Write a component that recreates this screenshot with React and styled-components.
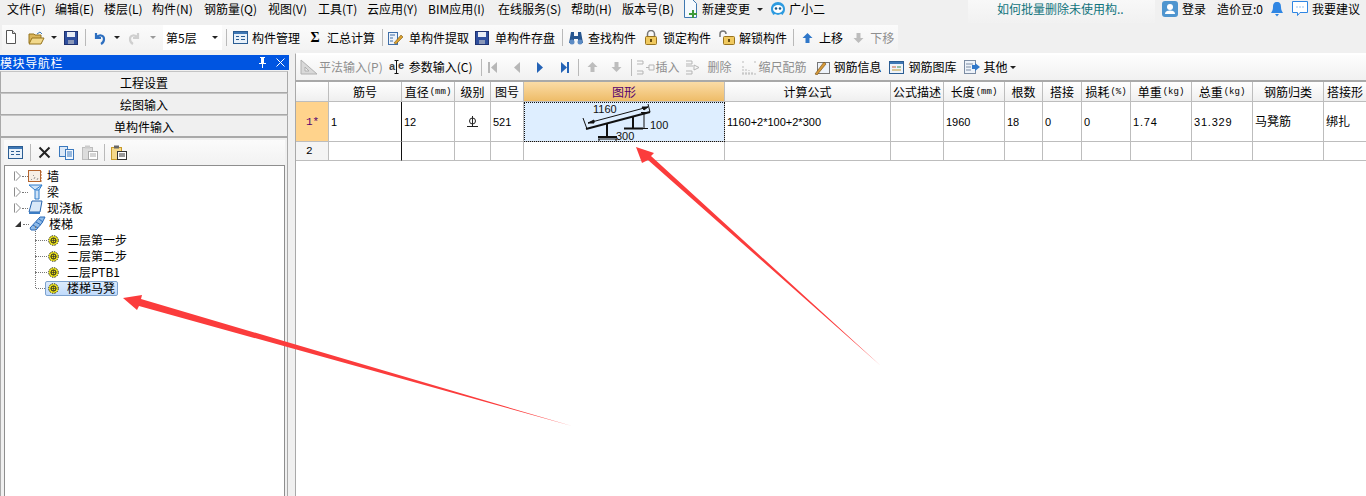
import React from 'react'
import styled, { createGlobalStyle } from 'styled-components'

const GlobalStyle = createGlobalStyle`
  html, body { margin: 0; padding: 0; background: #f0f0f0; overflow: hidden; }
  * { box-sizing: border-box; }
  #root { width: 1366px; height: 496px; }
`

const Page = styled.div`
  position: relative;
  width: 1366px;
  height: 496px;
  overflow: hidden;
  background: #f0f0f0;
  color: #000;
  font: 12px/16px "Noto Sans CJK SC", "Liberation Sans", sans-serif;
`

const MenuBar = styled.div`
  height: 25px;
  display: flex;
  align-items: flex-start;
  padding: 1px 6px 0 7px;
`
const MenuItem = styled.span`
  flex: none;
  width: ${p => p.$w}px;
  height: 16px;
  white-space: nowrap;
  display: flex;
  align-items: center;
`
const TipBox = styled.div`
  width: 187px;
  height: 23px;
  margin: -1px 7px 0 auto;
  padding: 1px 0 0 29px;
  color: #10737c;
  background: linear-gradient(#f8f8f8, #f1f1f1);
`
const UserArea = styled.div`
  flex: none;
  width: 198px;
  display: flex;
  align-items: center;
  white-space: nowrap;
`
const UserItem = styled.span`
  display: inline-flex;
  flex: none;
  width: ${p => (p.$w ? `${p.$w}px` : 'auto')};
  margin-right: ${p => p.$mr ?? 0}px;
`

const ToolRow = styled.div`
  display: flex;
  align-items: center;
  height: 25px;
  width: 896px;
  background: linear-gradient(#fbfbfb, #f3f3f3);
  margin-left: 2px;
  padding-left: 3px;
  white-space: nowrap;
`
const Tool = styled.span`
  display: inline-flex;
  flex: none;
  align-items: center;
  gap: ${p => p.$gap ?? 4}px;
  margin-right: ${p => p.$mr ?? 0}px;
  color: ${p => (p.$off ? '#8f8f8f' : '#000')};
`
const Sep = styled.i`
  flex: none;
  width: 1px;
  height: 17px;
  margin: 0 ${p => p.$r ?? 5}px 0 ${p => p.$l ?? 5}px;
  background: #b9b9b9;
`
const Caret = styled.i`
  flex: none;
  width: 0;
  height: 0;
  margin: 0 ${p => p.$r ?? 7}px 0 ${p => p.$l ?? 6}px;
  border-left: 3px solid transparent;
  border-right: 3px solid transparent;
  border-top: 3px solid ${p => p.$c || '#222'};
`
const FloorSelect = styled.span`
  flex: none;
  width: 59px;
  height: 25px;
  background: #fff;
  display: flex;
  align-items: center;
  justify-content: space-between;
  padding-left: 3px;
`
const Sigma = styled.b`
  width: 10px;
  text-align: center;
  font-family: "Liberation Serif", serif;
  font-size: 14px;
`

const Body = styled.div`
  display: flex;
  height: 446px;
  margin-top: 3px;
`

const LeftPanel = styled.aside`
  width: 289px;
  padding-top: 2px;
  flex: none;
`
const TitleBar = styled.div`
  height: 15px;
  background: #0055e1;
  color: #fff;
  display: flex;
  align-items: center;
  letter-spacing: 0.6px;
  justify-content: space-between;
  padding-right: 2px;
`
const TitleIcons = styled.div`
  display: flex;
  gap: 9px;
  align-items: center;
  margin-right: 2px;
`
const NavButton = styled.div`
  height: 22px;
  width: 288px;
  margin-top: ${p => p.$top ?? 0}px;
  border: 1px solid #a9a9a9;
  border-top-color: #c4c4c4;
  text-align: center;
  line-height: 21px;
  background: #f0f0f0;
`
const SubPanel = styled.div`
  width: 288px;
  height: 359px;
  border: 1px solid #a9a9a9;
  border-bottom: 0;
  padding: 2px 2px 0 3px;
`
const SubTools = styled.div`
  height: 25px;
  display: flex;
  align-items: center;
  padding-left: 4px;
  background: linear-gradient(#fbfbfb, #f2f2f2);
`
const Tree = styled.div`
  height: 332px;
  background: #fff;
  border: 1px solid #8e8e8e;
  border-bottom: 0;
  padding-top: 2px;
`
const TreeRow = styled.div`
  position: relative;
  height: 16px;
  display: flex;
  align-items: center;
  padding-left: ${p => (p.$leaf ? 31 : 10)}px;
`
const Expander = styled.span`
  width: 0;
  height: 0;
  margin-right: 2px;
  border-top: 5px solid transparent;
  border-bottom: 5px solid transparent;
  border-left: 5px solid #fff;
  filter: drop-shadow(1px 0 0 #8c8c8c) drop-shadow(-1px 0 0 #8c8c8c);
`
const OpenMark = styled.span`
  width: 0;
  height: 0;
  margin: 0 2px 0 0;
  border-left: 6px solid transparent;
  border-bottom: 6px solid #333;
`
const Stub = styled.span`
  width: ${p => p.$w}px;
  border-top: 1px dotted #777;
  flex: none;
`
const VLine = styled.span`
  position: absolute;
  left: 30px;
  top: ${p => p.$top}px;
  height: ${p => p.$h}px;
  border-left: 1px dotted #777;
`
const TreeLabel = styled.span`
  display: inline-flex;
  align-items: center;
  margin-left: ${p => p.$ml ?? 0}px;
  white-space: nowrap;
`
const LeafLabel = styled.span`
  display: inline-flex;
  align-items: center;
  gap: 8px;
  height: 15px;
  margin-left: ${p => (p.$on ? -2 : 1)}px;
  white-space: nowrap;
  ${p => p.$on && `
    padding: 0 2px;
    border: 1px solid #7da2ce;
    border-radius: 2px;
    background: linear-gradient(#dcebfc, #c1dbfc);
  `}
`

const RightPanel = styled.main`
  margin-left: 6px;
  flex: 1;
  min-width: 0;
  border-left: 1px solid #a9a9a9;
  border-top: 1px solid #fff;
  background: #fff;
`
const GridTools = styled.div`
  display: flex;
  align-items: center;
  height: 27px;
  margin-top: 1px;
  padding: 0 0 1px 4px;
  white-space: nowrap;
  background: linear-gradient(#fdfdfd, #f1f1f1);
  border-bottom: 2px solid #a9a9a9;
`
const SheetGrid = styled.div`
  display: grid;
  grid-template-columns: 33px 73px 53px 36px 33px 201px 166px 53px 61px 38px 39px 49px 61px 61px 71px 43px;
  grid-template-rows: 20px 40px 19px;
  width: 1071px;
  overflow: hidden;
  font-size: 11px;
`
const Cell = styled.div`
  display: flex;
  align-items: center;
  justify-content: ${p => (p.$center ? 'center' : 'flex-start')};
  padding-left: ${p => (p.$center ? 0 : 2)}px;
  overflow: hidden;
  white-space: nowrap;
  border-right: 1px solid ${p => (p.$thick ? '#111' : '#bdbdbd')};
  border-bottom: 1px solid #bdbdbd;
  font-family: "Liberation Sans", "Noto Sans CJK SC", sans-serif;
  letter-spacing: ${p => (p.$spaced ? '0.8px' : 0)};
  font-size: ${p => (p.$cjk ? '12px' : '11px')};
`
const HeadCell = styled.div`
  display: flex;
  align-items: center;
  justify-content: center;
  overflow: hidden;
  white-space: nowrap;
  font-size: 12px;
  border-right: 1px solid #bdbdbd;
  border-bottom: 1px solid #bdbdbd;
  color: ${p => (p.$active ? '#55006e' : '#000')};
  background: ${p => (p.$active
    ? 'linear-gradient(#fbdca6, #eebc68)'
    : 'linear-gradient(#ffffff, #efefef)')};
  small {
    font: 9px "Liberation Mono", monospace;
    margin-left: 1px;
  }
`
const RowHead = styled(HeadCell)`
  justify-content: flex-start;
  font-size: 11px;
  color: ${p => (p.$current ? '#55006e' : '#000')};
  background: ${p => (p.$current ? '#ffd38c' : '#f4f4f4')};
  font-family: "Liberation Mono", monospace;
  padding-left: 10px;
`
const ShapeCell = styled.div`
  background: #deeeff;
  outline: 1px dotted #111;
  outline-offset: -1px;
  border-right: 1px solid #bdbdbd;
  border-bottom: 1px solid #bdbdbd;
  overflow: hidden;
`
const ShapeSvg = styled.svg`
  display: block;
`

const ArrowLayer = styled.svg`
  position: absolute;
  left: 0;
  top: 0;
  pointer-events: none;
`

/* ---- 小图标 ---- */
const IconSvg = styled.svg`
  flex: none;
`
const Svg = ({ w = 16, h = 16, children }) => (
  <IconSvg width={w} height={h} viewBox={`0 0 ${w} ${h}`}>{children}</IconSvg>
)
const Manage = () => (
  <Svg w={15} h={13}>
    <rect x=".5" y=".5" width="14" height="12" fill="#e8f1fa" stroke="#2b5d93" />
    <rect x="1" y="1" width="13" height="2" fill="#3f78b5" />
    <path d="M3 5.500h3M3 8.500h3M8 5.500h4M8 8.500h4" stroke="#2b5d93" fill="none" />
  </Svg>
)
const NewFile = () => (
  <Svg w={12} h={15}>
    <path d="M1.500.5h6l3 3v10h-9z" fill="#fff" stroke="#555" />
    <path d="M7.500.5v3h3" fill="#ddd" stroke="#555" />
  </Svg>
)
const OpenFile = () => (
  <Svg w={17} h={14}>
    <path d="M1 3h5l1 1h6v8H1z" fill="#d9b45a" stroke="#96751f" />
    <path d="M1 13l3-6h12l-3 6z" fill="#f2d98c" stroke="#96751f" />
    <path d="M9 3l3-2 2 2" fill="none" stroke="#3f78b5" />
  </Svg>
)
const Floppy = () => (
  <Svg w={14} h={14}>
    <rect x=".5" y=".5" width="13" height="13" fill="#2f4f9e" stroke="#1f3270" />
    <rect x="3" y="1" width="8" height="5" fill="#e9eef6" />
    <rect x="4" y="9" width="6" height="4" fill="#8b98b8" />
  </Svg>
)
const Undo = () => (
  <Svg w={13} h={14}>
    <path d="M3 2v5h5M3 7c3-4 8-3 8 1 0 2-1 4-3 5" fill="none" stroke="#2d6fc0" strokeWidth="2.200" />
  </Svg>
)
const Redo = () => (
  <Svg w={13} h={14}>
    <path d="M10 2v5H5M10 7C7 3 2 4 2 8c0 2 1 4 3 5" fill="none" stroke="#cfcfcf" strokeWidth="2.200" />
  </Svg>
)
const Extract = () => (
  <Svg w={16} h={15}>
    <rect x=".5" y="2.500" width="9" height="12" fill="#eef3fa" stroke="#3f6ea8" />
    <path d="M2 5h5M2 8h3M2 11h3" stroke="#3f6ea8" />
    <path d="M6 13l7-8 2 2-7 7z" fill="#dba02f" stroke="#7b5b16" strokeWidth=".6" />
  </Svg>
)
const Binoculars = () => (
  <Svg w={16} h={14}>
    <path d="M3 1h3v4h4V1h3l2 11h-5V8H6v4H1z" fill="#27568f" />
    <circle cx="4" cy="11" r="2.500" fill="#5c8bc4" />
    <circle cx="12" cy="11" r="2.500" fill="#5c8bc4" />
  </Svg>
)
const Lock = ({ open }) => (
  <Svg w={open ? 18 : 14} h={15}>
    <path d={open ? 'M2 7V4a3 3 0 0 1 6 0' : 'M3.500 7V4a3.500 3.500 0 0 1 7 0v3'} fill="none" stroke="#777" strokeWidth="1.500" />
    <rect x={open ? 5.5 : 1.5} y="6.500" width="11" height="8" rx="1" fill="#f0c95f" stroke="#99741f" />
    <rect x={open ? 10 : 6} y="9" width="2" height="3" fill="#6b4f10" />
  </Svg>
)
const UpDown = ({ down, off }) => (
  <Svg w={11} h={12}>
    <path d={down ? 'M3.500 1h4v5h3L5.500 11 .5 6h3z' : 'M3.500 11h4V6h3L5.500 1 .5 6h3z'} fill={off ? '#bdbdbd' : '#2f77c9'} />
  </Svg>
)
const Step = ({ dir, bar, off }) => {
  const c = off ? '#b7b7b7' : '#2463b6'
  return (
    <Svg w={11} h={13}>
      {dir === 'l'
        ? <path d="M9 1v11L3 6.500z" fill={c} />
        : <path d="M2 1v11l6-5.500z" fill={c} />}
      {bar && <rect x={dir === 'l' ? 0 : 8} y="1" width="2" height="11" fill={c} />}
    </Svg>
  )
}
const Ruler = () => (
  <Svg w={18} h={16}>
    <path d="M1 15V1l16 14z" fill="#d9d9d9" stroke="#b0b0b0" />
    <path d="M5 12V8l4 4z" fill="#f0f0f0" stroke="#b0b0b0" />
  </Svg>
)
// 参数输入: a 和 e 中间一个光标
const ParamGlyph = () => (
  <Svg w={17} h={16}>
    <g fontFamily="Liberation Sans, sans-serif" fontWeight="700" fontSize="11" fill="#444">
      <text x="0" y="11">a</text>
      <text x="9" y="10">e</text>
    </g>
    <path d="M7.500 2v12M5.500 1.500h4M5.500 14.500h4" stroke="#111" fill="none" />
  </Svg>
)
const Insert = ({ del }) => (
  <Svg w={19} h={15}>
    <path d={del ? 'M1 1h6v3H1M1 11h6v3H1M1 6h7' : 'M1 1h6v3H1M1 11h6v3H1'} fill="none" stroke="#b5b5b5" />
    <path d={del ? 'M9 5l5 2.500-5 2.500z' : 'M18 5v5h-5V5zM10 7.500h3'} fill="none" stroke="#b5b5b5" />
  </Svg>
)
const Scale = () => (
  <Svg w={17} h={15}>
    <path d="M1 14h15M2 14V6M5 14V8M8 14v-4M11 14v-3M1 2h3M13 2h3" stroke="#bbb" fill="none" strokeDasharray="2 1" />
  </Svg>
)
const RebarInfo = () => (
  <Svg w={16} h={15}>
    <rect x="3.500" y="2.500" width="12" height="11" fill="#eef3fa" stroke="#777" />
    <path d="M1 14l9-12 2 2-9 11z" fill="#d79a3a" stroke="#6d4b14" strokeWidth=".6" />
  </Svg>
)
const RebarLib = () => (
  <Svg w={15} h={13}>
    <rect x=".5" y=".5" width="14" height="12" fill="#eef3fa" stroke="#2b5d93" />
    <rect x="1" y="1" width="13" height="2" fill="#3f78b5" />
    <path d="M3 6h4" stroke="#c65a3a" /><path d="M8 6h4" stroke="#3f8a4f" /><path d="M3 9h9" stroke="#c29a2f" />
  </Svg>
)
const Other = () => (
  <Svg w={16} h={14}>
    <rect x=".5" y=".5" width="11" height="13" fill="#eef3fa" stroke="#7d8da3" />
    <path d="M2 4h7M2 7h5M2 10h5" stroke="#7d8da3" />
    <path d="M8 5h3V3l5 4-5 4V9H8z" fill="#2f77c9" />
  </Svg>
)
const DocAdd = () => (
  <Svg w={15} h={20}>
    <path d="M1.500.5h8l4 4v14h-12z" fill="#f5fafe" stroke="#3e78b0" />
    <path d="M9 11h2v3h3v2h-3v3H9v-3H6v-2h3z" fill="#3f9a3a" />
  </Svg>
)
const Mascot = () => (
  <Svg w={16} h={16}>
    <path d="M8 1c4 0 7 3 7 7s-2 4-2 6l-2-1-3 1-3-1-2 1c0-2-2-2-2-6s3-7 7-7z" fill="#2d9be0" />
    <ellipse cx="8" cy="8" rx="5" ry="4" fill="#fff" />
    <circle cx="6" cy="7.500" r="1.300" fill="#1b5b8a" /><circle cx="10" cy="7.500" r="1.300" fill="#1b5b8a" />
  </Svg>
)
const User = () => (
  <Svg w={16} h={16}>
    <rect width="16" height="16" rx="3" fill="#4f95cf" />
    <circle cx="8" cy="6" r="3" fill="#fff" />
    <path d="M3 13c0-3 3-3.500 5-3.500s5 .5 5 3.500z" fill="#fff" />
  </Svg>
)
const Bell = () => (
  <Svg w={14} h={16}>
    <path d="M7 1c3 0 4 2 4 5 0 3 1 4 2 6H1c1-2 2-3 2-6 0-3 1-5 4-5z" fill="#2f86e3" />
    <path d="M5 13h4l-2 2.500z" fill="#2f86e3" />
  </Svg>
)
const Chat = () => (
  <Svg w={16} h={16}>
    <path d="M.5.5h15v11H8l-2.500 3v-3h-5z" fill="#fff" stroke="#2f86e3" />
    <path d="M4.500 6h1M7.500 6h1M10.500 6h1" stroke="#2f86e3" />
  </Svg>
)
const Cross = () => (
  <Svg w={13} h={13}>
    <path d="M1.500 1.500l10 10M11.500 1.500l-10 10" stroke="#222" strokeWidth="2" />
  </Svg>
)
const Copy = () => (
  <Svg w={15} h={14}>
    <rect x=".5" y=".5" width="8" height="10" fill="#dbe8f7" stroke="#3a78bd" />
    <rect x="6.500" y="3.500" width="8" height="10" fill="#f3f8fe" stroke="#3a78bd" />
    <path d="M8 6h5M8 8h5M8 10h5" stroke="#3a78bd" />
  </Svg>
)
const Paste = ({ dim }) => {
  const a = dim ? '#bdbdbd' : '#c79a2a'
  const b = dim ? '#dcdcdc' : '#f5d98a'
  return (
    <Svg w={16} h={15}>
      <rect x=".5" y="2.500" width="10" height="12" fill={b} stroke={a} />
      <rect x="3" y=".5" width="5" height="3" fill={dim ? '#ccc' : '#666'} />
      <rect x="6.500" y="6.500" width="9" height="8" fill="#fff" stroke={dim ? '#aaa' : '#333'} />
      <path d="M8 9h6M8 11h6" stroke={dim ? '#aaa' : '#333'} />
    </Svg>
  )
}
const Wall = () => (
  <Svg w={15} h={14}>
    <rect x=".5" y="1.500" width="12" height="11" fill="#f7efe6" stroke="#b5652f" />
    <path d="M3 11l1-1M6 10l1-2M9 11l1-2M5 7l1-1" stroke="#999" />
    <path d="M13 3h1M13 6h1M13 9h1M13 12h1" stroke="#c0682c" />
  </Svg>
)
const Beam = () => (
  <Svg w={15} h={16}>
    <path d="M1 1h13l-3 5v9H7V6z" fill="#cfe3f7" stroke="#2f7ccb" />
    <path d="M7 6l7-5M8 6h3" stroke="#2f7ccb" />
  </Svg>
)
const Slab = () => (
  <Svg w={15} h={16}>
    <path d="M4 1h10l-2 11H1z" fill="#d8e8f8" stroke="#2563ad" />
    <path d="M1 12h11v2H1z" fill="#3b7cc4" />
  </Svg>
)
const Stairs = () => (
  <Svg w={17} h={16}>
    <path d="M1 12L11 1h5l-3 6-6 7H2z" fill="#8fbbe8" stroke="#2a6ab8" />
    <path d="M4 9l5 3M7 6l5 3M10 3l4 3" stroke="#2a6ab8" />
  </Svg>
)
const Gear = () => (
  <Svg w={11} h={11}>
    <circle cx="5.500" cy="5.500" r="4.800" fill="#f5ec1e" stroke="#222" strokeDasharray="1.500 1" />
    <circle cx="5.500" cy="5.500" r="2.600" fill="#efe000" stroke="#222" />
    <path d="M3 5.500h5M5.500 3v5" stroke="#333" strokeWidth=".7" />
  </Svg>
)
const GradeMark = () => (
  <Svg w={11} h={11}>
    <circle cx="5.500" cy="5" r="3" fill="none" stroke="#222" />
    <path d="M5.500 0v10M0 10.500h11" stroke="#222" />
  </Svg>
)
const Pin = () => (
  <Svg w={9} h={11}>
    <path d="M2 0h5v1H6v5h2v1H5v4H4V7H1V6h2V1H2z" fill="#fff" />
  </Svg>
)
const CloseX = () => (
  <Svg w={9} h={9}>
    <path d="M.5.500l8 8M8.500.500l-8 8" stroke="#fff" />
  </Svg>
)

// 马凳筋示意图
const ShapeDrawing = () => (
  <ShapeSvg width="200" height="40" viewBox="0 0 200 40">
    <g stroke="#111" fill="none">
      <path d="M62 27L126 10" strokeWidth="2" />
      <path d="M59 16l4 11M124 2l2 8" />
      <path d="M64 21L124 5" />
      <path d="M64 21l6-3v3zM124 5l-6 0 2 3z" fill="#111" />
      <path d="M83 22V34M74 35h19" strokeWidth="2" />
      <path d="M74 37h19M75 37v3M92 37v3" />
      <path d="M109 14V26M100 26.500h19" strokeWidth="2" />
      <path d="M117 10.500h7M117 26.500h7M120 11v15" />
    </g>
    <g fontFamily="Liberation Sans, sans-serif" fontSize="11" fill="#111">
      <text x="69" y="11">1160</text>
      <text x="126" y="27">100</text>
      <text x="92" y="37.500">300</text>
    </g>
  </ShapeSvg>
)

const menus = [
  ['文件(F)', 48], ['编辑(E)', 49], ['楼层(L)', 48], ['构件(N)', 52], ['钢筋量(Q)', 64], ['视图(V)', 50],
  ['工具(T)', 49], ['云应用(Y)', 61], ['BIM应用(I)', 70], ['在线服务(S)', 73], ['帮助(H)', 51], ['版本号(B)', 61],
]

const columns = [
  ['筋号'], ['直径', '(mm)'], ['级别'], ['图号'], ['图形'], ['计算公式'], ['公式描述'], ['长度', '(mm)'],
  ['根数'], ['搭接'], ['损耗', '(%)'], ['单重', '(kg)'], ['总重', '(kg)'], ['钢筋归类'], ['搭接形'],
]

const App = () => (
  <Page>
    <GlobalStyle />
    <MenuBar>
      {menus.map(([label, w]) => <MenuItem key={label} $w={w}>{label}</MenuItem>)}
      <MenuItem $w={19}><DocAdd /></MenuItem>
      <MenuItem $w={55}>新建变更</MenuItem>
      <MenuItem $w={13}><Caret $l={0} $r={0} /></MenuItem>
      <MenuItem $w={19}><Mascot /></MenuItem>
      <MenuItem $w={36}>广小二</MenuItem>
      <TipBox>如何批量删除未使用构..</TipBox>
      <UserArea>
        <UserItem $mr={4}><User /></UserItem>
        <UserItem $mr={11}>登录</UserItem>
        <UserItem $w={53}>造价豆:0</UserItem>
        <UserItem $mr={8}><Bell /></UserItem>
        <UserItem $mr={4}><Chat /></UserItem>
        <UserItem>我要建议</UserItem>
      </UserArea>
    </MenuBar>

    <ToolRow>
      <Tool $mr={11}><NewFile /></Tool>
      <Tool><OpenFile /></Tool>
      <Caret />
      <Tool><Floppy /></Tool>
      <Sep $l={7} $r={7} />
      <Tool><Undo /></Tool>
      <Caret $l={8} $r={8} />
      <Tool><Redo /></Tool>
      <Caret $l={9} $r={7} $c="#999" />
      <FloorSelect>第5层<Caret $l={0} $r={4} /></FloorSelect>
      <Sep $l={4} $r={6} />
      <Tool $mr={10}><Manage />构件管理</Tool>
      <Tool $gap={7}><Sigma>Σ</Sigma>汇总计算</Tool>
      <Sep $l={7} $r={5} />
      <Tool $gap={5} $mr={6}><Extract />单构件提取</Tool>
      <Tool $gap={6}><Floppy />单构件存盘</Tool>
      <Sep $l={7} $r={5} />
      <Tool $mr={8}><Binoculars />查找构件</Tool>
      <Tool $gap={5} $mr={7}><Lock />锁定构件</Tool>
      <Tool $gap={3} $mr={6}><Lock open />解锁构件</Tool>
      <Sep $l={0} $r={8} />
      <Tool $gap={6} $mr={10}><UpDown />上移</Tool>
      <Tool $gap={6} $off><UpDown down off />下移</Tool>
    </ToolRow>

    <Body>
      <LeftPanel>
        <TitleBar>
          模块导航栏
          <TitleIcons><Pin /><CloseX /></TitleIcons>
        </TitleBar>
        <NavButton $top={1}>工程设置</NavButton>
        <NavButton>绘图输入</NavButton>
        <NavButton>单构件输入</NavButton>
        <SubPanel>
          <SubTools>
            <Manage />
            <Sep $l={7} $r={7} />
            <Tool $mr={8}><Cross /></Tool>
            <Tool $mr={8}><Copy /></Tool>
            <Paste dim />
            <Sep $l={6} $r={6} />
            <Paste />
          </SubTools>
          <Tree>
            <TreeRow><Expander /><Stub $w={6} /><Wall /><TreeLabel $ml={4}>墙</TreeLabel></TreeRow>
            <TreeRow><Expander /><Stub $w={6} /><Beam /><TreeLabel $ml={4}>梁</TreeLabel></TreeRow>
            <TreeRow><Expander /><Stub $w={6} /><Slab /><TreeLabel $ml={4}>现浇板</TreeLabel></TreeRow>
            <TreeRow><OpenMark /><Stub $w={6} /><Stairs /><TreeLabel $ml={3}>楼梯</TreeLabel></TreeRow>
            <TreeRow $leaf><VLine $top={-6} $h={14} /><Stub $w={11} /><LeafLabel><Gear />二层第一步</LeafLabel></TreeRow>
            <TreeRow $leaf><VLine $top={-8} $h={16} /><Stub $w={11} /><LeafLabel><Gear />二层第二步</LeafLabel></TreeRow>
            <TreeRow $leaf><VLine $top={-8} $h={16} /><Stub $w={11} /><LeafLabel><Gear />二层PTB1</LeafLabel></TreeRow>
            <TreeRow $leaf><VLine $top={-8} $h={16} /><Stub $w={11} /><LeafLabel $on><Gear />楼梯马凳</LeafLabel></TreeRow>
          </Tree>
        </SubPanel>
      </LeftPanel>

      <RightPanel>
        <GridTools>
          <Tool $off $gap={1} $mr={6}><Ruler />平法输入(P)</Tool>
          <Tool $gap={3} $mr={4}><ParamGlyph />参数输入(C)</Tool>
          <Sep $l={4} $r={6} />
          <Tool $mr={12}><Step dir="l" bar off /></Tool>
          <Tool $mr={13}><Step dir="l" off /></Tool>
          <Tool $mr={13}><Step dir="r" /></Tool>
          <Tool><Step dir="r" bar /></Tool>
          <Sep $l={8} $r={8} />
          <Tool $mr={13}><UpDown off /></Tool>
          <Tool><UpDown down off /></Tool>
          <Sep $l={9} $r={4} />
          <Tool $off $gap={1} $mr={5}><Insert />插入</Tool>
          <Tool $off $gap={4} $mr={9}><Insert del />删除</Tool>
          <Tool $off $gap={1} $mr={7}><Scale />缩尺配筋</Tool>
          <Tool $gap={4} $mr={7}><RebarInfo />钢筋信息</Tool>
          <Tool $gap={5} $mr={7}><RebarLib />钢筋图库</Tool>
          <Tool $gap={4}><Other />其他</Tool>
          <Caret $l={2} $r={0} />
        </GridTools>
        <SheetGrid>
          <HeadCell />
          {columns.map(([name, unit], i) => (
            <HeadCell key={name} $active={i === 4}>{name}{unit && <small>{unit}</small>}</HeadCell>
          ))}

          <RowHead $current>1*</RowHead>
          <Cell $thick>1</Cell>
          <Cell>12</Cell>
          <Cell $center><GradeMark /></Cell>
          <Cell>521</Cell>
          <ShapeCell><ShapeDrawing /></ShapeCell>
          <Cell>1160+2*100+2*300</Cell>
          <Cell />
          <Cell>1960</Cell>
          <Cell>18</Cell>
          <Cell>0</Cell>
          <Cell>0</Cell>
          <Cell $spaced>1.74</Cell>
          <Cell $spaced>31.329</Cell>
          <Cell $cjk>马凳筋</Cell>
          <Cell $cjk>绑扎</Cell>

          <RowHead>2</RowHead>
          <Cell $thick />
          {Array.from({ length: 14 }, (_, i) => <Cell key={i} />)}
        </SheetGrid>
      </RightPanel>
    </Body>

    <ArrowLayer width="1366" height="496" viewBox="0 0 1366 496">
      <path d="M123 298L142 295 141 299 572 426 139 306 137 310z" fill="#fb3c3c" />
      <path d="M636 147L654 153 651 156 881 366 648 160 642 163z" fill="#fb3c3c" />
    </ArrowLayer>
  </Page>
)

export default App
